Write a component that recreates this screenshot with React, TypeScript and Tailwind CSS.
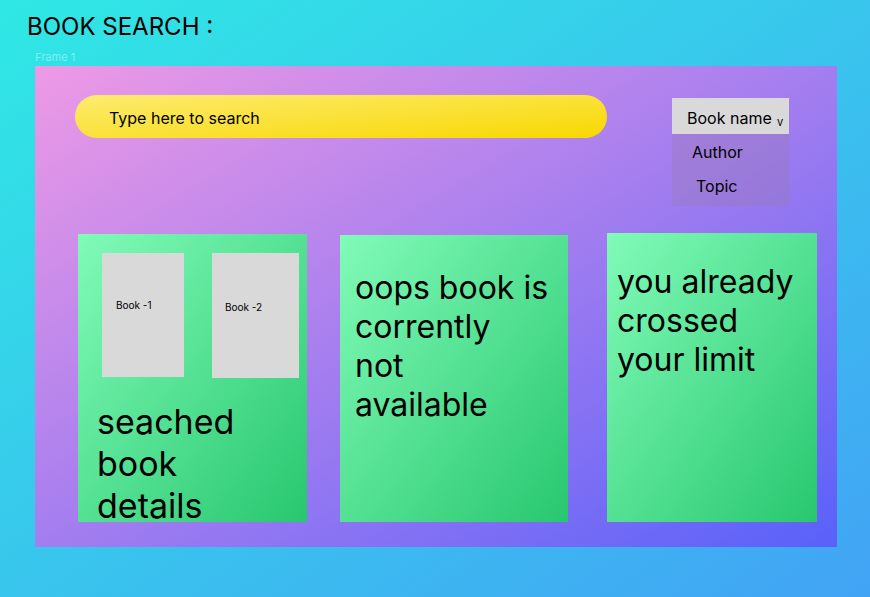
import type { ReactNode } from "react";

function ResultCard({ className, children }: { className: string; children: ReactNode }) {
  return (
    <section
      className={`min-w-0 basis-0 bg-[linear-gradient(to_bottom_right,#81fbb8,#28c76f)] ${className}`}
    >
      {children}
    </section>
  );
}

function SearchTypePicker() {
  return (
    <div className="mt-[3px] w-[117px] shrink-0 text-base">
      <div className="flex h-9 items-center bg-[#d9d9d9] pt-1 pr-1 pl-[15px]">
        <select
          aria-label="Search by"
          defaultValue="name"
          className="min-w-0 flex-1 appearance-none bg-transparent outline-none"
        >
          <option value="name">Book name</option>
          <option value="author">Author</option>
          <option value="topic">Topic</option>
        </select>
        <span aria-hidden="true" className="w-2 pt-2 text-[11px] leading-4">
          v
        </span>
      </div>
      <div className="flex h-[72px] flex-col items-start bg-[#967a96]/25 pt-[1px]">
        <button type="button" className="h-[34px] pl-5">
          Author
        </button>
        <button type="button" className="h-[34px] pl-6">
          Topic
        </button>
      </div>
    </div>
  );
}

export default function App() {
  return (
    <div className="min-h-screen bg-[linear-gradient(to_bottom_right,#2fe8e4,#42a3f5)] pr-[33px] pb-[50px] pl-[35px] font-['Inter',sans-serif] text-black">
      <h1 className="-ml-2 pt-3 text-2xl leading-[29px] font-normal">BOOK SEARCH :</h1>
      <p className="pt-2 pb-[1px] text-[11px] leading-4 text-white/40">Frame 1</p>

      <main className="bg-[linear-gradient(to_bottom_right,#ee9ae5,#5961f9)] pt-[29px] pb-[25px]">
        <div className="flex items-start justify-between gap-[65px] pr-12 pl-10">
          <input
            type="search"
            aria-label="Search books"
            placeholder="Type here to search"
            className="h-[43px] min-w-0 flex-1 appearance-none rounded-full bg-[linear-gradient(to_bottom_right,#fdeb71,#f8d800)] pt-[2px] pr-8 pl-[34px] text-base outline-none placeholder:text-black placeholder:opacity-100"
          />
          <SearchTypePicker />
        </div>

        <div className="mt-7 flex h-[288px] items-stretch gap-[33px] pr-5 pl-[43px]">
          <ResultCard className="grow-[229]">
            <div className="flex justify-between pt-[19px] pr-2 pl-6 text-[10px] leading-3">
              <div className="h-[124px] w-[82px] bg-[#d9d9d9] pt-[46px] pl-[14px]">Book -1</div>
              <div className="h-[125px] w-[87px] bg-[#d9d9d9] pt-12 pl-[13px]">Book -2</div>
            </div>
            <p className="pt-[23px] pl-[19px] text-[34px] leading-[42px]">
              seached
              <br />
              book
              <br />
              details
            </p>
          </ResultCard>
          <ResultCard className="mt-[1px] grow-[228]">
            <p className="pt-[33px] pl-[15px] text-[32px] leading-[39px]">
              oops book is
              <br />
              corrently
              <br />
              not
              <br />
              available
            </p>
          </ResultCard>
          <ResultCard className="-mt-[1px] ml-[6px] grow-[210]">
            <p className="pt-[29px] pl-[10px] text-[32px] leading-[39px]">
              you already
              <br />
              crossed
              <br />
              your limit
            </p>
          </ResultCard>
        </div>
      </main>
    </div>
  );
}
